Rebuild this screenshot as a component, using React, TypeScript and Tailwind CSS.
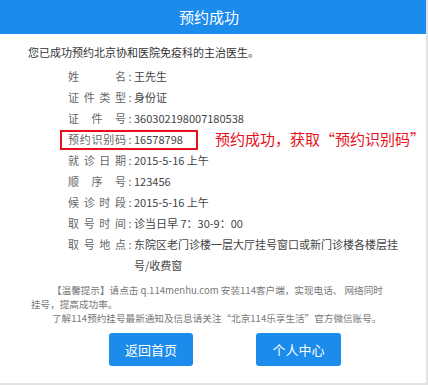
const ROWS: { label: string; value: string }[] = [
  { label: '姓名', value: '王先生' },
  { label: '证件类型', value: '身份证' },
  { label: '证件号', value: '360302198007180538' },
];

const ROWS_AFTER: { label: string; value: string }[] = [
  { label: '就诊日期', value: '2015-5-16 上午' },
  { label: '顺序号', value: '123456' },
  { label: '候诊时段', value: '2015-5-16 上午' },
  { label: '取号时间', value: '诊当日早 7：30-9：00' },
];

const FONT = "font-['Microsoft_YaHei','Noto_Sans_CJK_SC','Noto_Sans',sans-serif]";

function Label({ text }: { text: string }) {
  return (
    <>
      <span className="w-[58px] shrink-0 text-[#666] [text-align-last:justify]">{text}</span>
      <span className="w-[8px] shrink-0 text-center text-[#666]">:</span>
    </>
  );
}

function InfoRow({ label, value }: { label: string; value: string }) {
  return (
    <div className="flex h-[21px] items-center">
      <Label text={label} />
      <span className="text-[#444]">{value}</span>
    </div>
  );
}

export default function App() {
  return (
    <div className={`${FONT} h-[385px] w-[428px] border-r-2 border-b-2 border-[#e2e2e2] bg-white`}>
      <div className="flex h-[34px] items-center justify-center bg-[#1b8bec] pr-[8px] text-[15px] text-white">
        预约成功
      </div>

      <p className="mt-[9px] pl-[28px] text-[11px] leading-[18px] text-[#333]">
        您已成功预约北京协和医院免疫科的主治医生。
      </p>

      <div className="mt-[5px] pl-[68px] text-[11px]">
        {ROWS.map((r) => (
          <InfoRow key={r.label} label={r.label} value={r.value} />
        ))}
        <div className="flex h-[21px] items-center">
          <div className="-ml-[8px] flex h-[20px] w-[138px] shrink-0 items-center border-2 border-[#e8101a] pl-[6px]">
            <Label text="预约识别码" />
            <span className="text-[#444]">16578798</span>
          </div>
          <span className="ml-[17px] whitespace-nowrap text-[15px] text-[#e8101a]">
            预约成功，获取“预约识别码”
          </span>
        </div>
        {ROWS_AFTER.map((r) => (
          <InfoRow key={r.label} label={r.label} value={r.value} />
        ))}
        <div className="flex items-start leading-[21px]">
          <Label text="取号地点" />
          <span className="w-[266px] text-[#444]">东院区老门诊楼一层大厅挂号窗口或新门诊楼各楼层挂号/收费窗</span>
        </div>
      </div>

      <div className="mt-[7px] pl-[31px] text-[9.6px] leading-[14px] text-[#777]">
        <p className="whitespace-nowrap indent-[21px]">
          【温馨提示】请点击 q.114menhu.com 安装114客户端，实现电话、 网络同时
          <br />
          挂号，提高成功率。
        </p>
        <p className="whitespace-nowrap indent-[21px]">
          了解114预约挂号最新通知及信息请关注“北京114乐享生活”官方微信账号。
        </p>
      </div>

      <div className="mt-[8px] flex gap-[63px] pl-[109px]">
        <button className="h-[33px] w-[84px] rounded-[3px] bg-[#1b8bec] text-[13px] text-white">返回首页</button>
        <button className="h-[33px] w-[85px] rounded-[3px] bg-[#1b8bec] text-[13px] text-white">个人中心</button>
      </div>
    </div>
  );
}
